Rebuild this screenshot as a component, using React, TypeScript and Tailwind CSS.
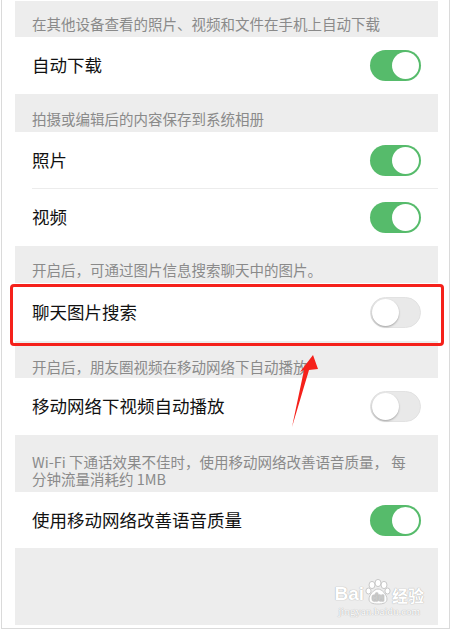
import React from "react";

type Item =
  | { kind: "header"; text: React.ReactNode; className: string }
  | { kind: "row"; label: string; on: boolean; divider?: boolean; className: string };

const items: Item[] = [
  { kind: "header", text: "在其他设备查看的照片、视频和文件在手机上自动下载", className: "h-[36px] pt-[14px]" },
  { kind: "row", label: "自动下载", on: true, className: "h-[57px]" },
  { kind: "header", text: "拍摄或编辑后的内容保存到系统相册", className: "h-[38px] pt-[16px]" },
  { kind: "row", label: "照片", on: true, divider: true, className: "h-[57px]" },
  { kind: "row", label: "视频", on: true, className: "h-[57px]" },
  { kind: "header", text: "开启后，可通过图片信息搜索聊天中的图片。", className: "h-[37px] pt-[15px]" },
  { kind: "row", label: "聊天图片搜索", on: false, className: "h-[58px]" },
  { kind: "header", text: "开启后，朋友圈视频在移动网络下自动播放", className: "h-[37px] pt-[17px]" },
  { kind: "row", label: "移动网络下视频自动播放", on: false, className: "h-[57px]" },
  {
    kind: "header",
    text: (
      <>
        Wi-Fi 下通话效果不佳时，使用移动网络改善语音质量， 每
        <br />
        分钟流量消耗约 1MB
      </>
    ),
    className: "h-[57px] pt-[18px]",
  },
  { kind: "row", label: "使用移动网络改善语音质量", on: true, className: "h-[56px]" },
];

const Toggle = ({ on }: { on: boolean }) =>
  on ? (
    <div className="w-[51px] h-[31px] rounded-full bg-[#56bb6b] relative">
      <div className="absolute right-[2px] top-[2px] w-[27px] h-[27px] rounded-full bg-white" />
    </div>
  ) : (
    <div className="w-[51px] h-[31px] rounded-full bg-[#e9e9e9] border border-[#e2e2e2] relative">
      <div className="absolute left-[1px] top-[1px] w-[27px] h-[27px] rounded-full bg-white shadow-[0_1px_2px_rgba(0,0,0,0.3)]" />
    </div>
  );

const Paw = () => (
  <svg width="26" height="26" viewBox="0 0 26 26" className="-mb-[2px]">
    <g fill="#fff" stroke="#c8c8c8" strokeWidth="1">
      <ellipse cx="7" cy="6" rx="3" ry="3.6" />
      <ellipse cx="13" cy="4" rx="3" ry="3.6" />
      <ellipse cx="19" cy="6" rx="3" ry="3.6" />
      <ellipse cx="3.5" cy="12" rx="2.6" ry="3" />
      <ellipse cx="22.5" cy="12" rx="2.6" ry="3" />
      <path d="M13 10c-4 0-9 6-9 10 0 4 4 5 9 5s9-1 9-5c0-4-5-10-9-10z" />
    </g>
    <text x="13" y="22" textAnchor="middle" fontSize="10" fontWeight="700" fill="#fff" stroke="#c8c8c8" strokeWidth="0.6" fontFamily="Liberation Sans, sans-serif">du</text>
  </svg>
);

export default function App() {
  return (
    <div className="w-[452px] h-[630px] bg-white relative overflow-hidden font-['Noto_Sans_CJK_SC','Noto_Sans',sans-serif]">
      <div className="ml-[1px] w-[449px] h-[629px] border-l border-r border-b border-[#dadada] pt-[1px] pl-[13px] pr-[11px] pb-[3px] flex flex-col">
        {items.map((it, i) =>
          it.kind === "header" ? (
            <div
              key={i}
              className={`bg-[#ededed] pl-[17px] text-[14.5px] leading-[17px] text-[#8a8a8a] ${it.className}`}
            >
              {it.text}
            </div>
          ) : (
            <div key={i} className={`bg-white relative flex items-center justify-between pl-[17px] pr-[17px] ${it.className}`}>
              <span className="text-[17.5px] text-[#111]">{it.label}</span>
              <Toggle on={it.on} />
              {it.divider && <div className="absolute left-[17px] right-0 bottom-0 h-px bg-[#ececec]" />}
            </div>
          )
        )}
        <div className="flex-1 bg-[#ededed] flex justify-end items-end pr-[14px] pb-[8px]">
          <div className="flex flex-col items-center select-none">
            <div className="flex items-end gap-[1px] font-['Liberation_Sans',sans-serif] text-[19px] font-bold leading-none text-white [text-shadow:0_0_1px_#b5b5b5,0_0_1px_#b5b5b5]">
              <span>Bai</span>
              <Paw />
              <span className="text-[16px] font-['Noto_Sans_CJK_SC',sans-serif]">经验</span>
            </div>
            <span className="mt-[3px] text-[11px] leading-none text-white font-['Liberation_Serif',serif] [text-shadow:0_0_1px_#b5b5b5,0_0_1px_#b5b5b5]">
              jingyan.baidu.com
            </span>
          </div>
        </div>
      </div>

      <div className="absolute left-[10px] top-[284px] w-[434px] h-[62px] border-[3px] border-[#f5211b] rounded-[4px]" />

      <svg className="absolute left-0 top-0" width="452" height="630" viewBox="0 0 452 630">
        <polygon
          points="313,355 318,369 309,370 292,427 304,370 300,372"
          fill="#f5211b"
        />
      </svg>
    </div>
  );
}
